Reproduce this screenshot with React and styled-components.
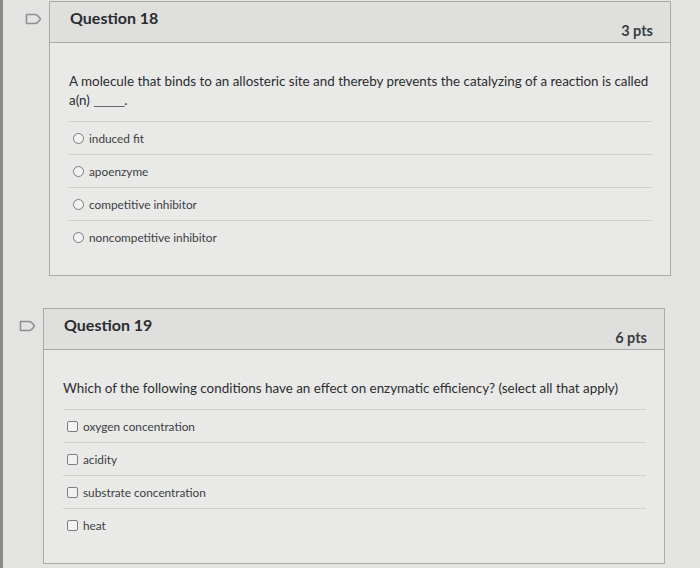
import React from "react";
import styled, { createGlobalStyle } from "styled-components";

const GlobalStyle = createGlobalStyle`
    html, body {
        margin: 0;
        padding: 0;
    }
    body {
        width: 700px;
        height: 568px;
        overflow: hidden;
        background: #e3e3e1;
        font-family: Lato, "Open Sans", sans-serif;
        color: #2f3235;
    }
`;

const questions = [
    {
        number: 18,
        points: 3,
        kind: "radio",
        shift: 0,
        text: "A molecule that binds to an allosteric site and thereby prevents the catalyzing of a reaction is called",
        blank: true,
        answers: ["induced fit", "apoenzyme", "competitive inhibitor", "noncompetitive inhibitor"],
    },
    {
        number: 19,
        points: 6,
        kind: "checkbox",
        shift: -6,
        text: "Which of the following conditions have an effect on enzymatic efficiency?  (select all that apply)",
        blank: false,
        answers: ["oxygen concentration", "acidity", "substrate concentration", "heat"],
    },
];

const Flag = () => (
    <svg width="17" height="12" viewBox="0 0 17 12">
        <path d="M1.5 1.5 H10 Q12 1.5 13.5 3.5 L15.5 6 L13.5 8.5 Q12 10.5 10 10.5 H1.5 Z" fill="none" stroke="#8d9196" strokeWidth="1.6" strokeLinejoin="round" />
    </svg>
);

const App = () => {
    return (
        <>
            <GlobalStyle />
            <Page>
                {questions.map((q) => (
                    <QuestionBlock key={q.number} $shift={q.shift}>
                        <FlagCol>
                            <Flag />
                        </FlagCol>
                        <Card>
                            <Header>
                                <Title>Question {q.number}</Title>
                                <Points>{q.points} pts</Points>
                            </Header>
                            <Body>
                                <Prompt>
                                    {q.text}
                                    {q.blank && (
                                        <>
                                            <br />
                                            a(n) <Blank>______</Blank>.
                                        </>
                                    )}
                                </Prompt>
                                <Answers>
                                    {q.answers.map((a) => (
                                        <Answer key={a}>
                                            {q.kind === "radio" ? <Radio /> : <Box />}
                                            <AnswerText>{a}</AnswerText>
                                        </Answer>
                                    ))}
                                </Answers>
                            </Body>
                        </Card>
                    </QuestionBlock>
                ))}
            </Page>
        </>
    );
};

const Page = styled.div`
    height: 568px;
    border-left: 3px solid #8b8b89;
    padding: 1px 29px 0 0;
    display: flex;
    flex-direction: column;
    gap: 32px;
`;

const QuestionBlock = styled.section`
    display: flex;
    align-items: flex-start;
    margin-left: ${(p) => 22 + p.$shift}px;
    margin-right: ${(p) => -p.$shift}px;
`;

const FlagCol = styled.div`
    width: 24px;
    padding-top: 8px;
    flex-shrink: 0;
`;

const Card = styled.div`
    flex: 1;
    border: 1px solid #a9aaa8;
    background: #e9e9e7;
`;

const Header = styled.div`
    height: 40px;
    display: flex;
    justify-content: space-between;
    padding: 0 17px 0 20px;
    background: #dfdfdd;
    border-bottom: 1px solid #a9aaa8;
`;

const Title = styled.h2`
    margin: 6px 0 0;
    font-size: 16px;
    font-weight: 700;
    color: #2b2d30;
`;

const Points = styled.div`
    align-self: flex-end;
    margin-bottom: 3px;
    font-size: 14.5px;
    font-weight: 700;
    color: #3a3d40;
`;

const Body = styled.div`
    padding: 29px 18px 22px 19px;
`;

const Prompt = styled.p`
    margin: 0;
    font-size: 13.4px;
    line-height: 19px;
    color: #2b2d30;
`;

const Blank = styled.span`
    letter-spacing: -1px;
    color: #555;
`;

const Answers = styled.ul`
    list-style: none;
    margin: 11px 0 0;
    padding: 0;
`;

const Answer = styled.li`
    height: 32px;
    display: flex;
    align-items: center;
    gap: 5px;
    padding-left: 4px;
    border-top: 1px solid #cfd0ce;
`;

const Radio = styled.span`
    width: 9px;
    height: 9px;
    border-radius: 50%;
    border: 1px solid #7b7e82;
    background: #f2f2f0;
`;

const Box = styled.span`
    width: 9px;
    height: 9px;
    border-radius: 2px;
    border: 1px solid #7b7e82;
    background: #f2f2f0;
`;

const AnswerText = styled.span`
    font-size: 11.8px;
    color: #3b3e42;
`;

export default App;
